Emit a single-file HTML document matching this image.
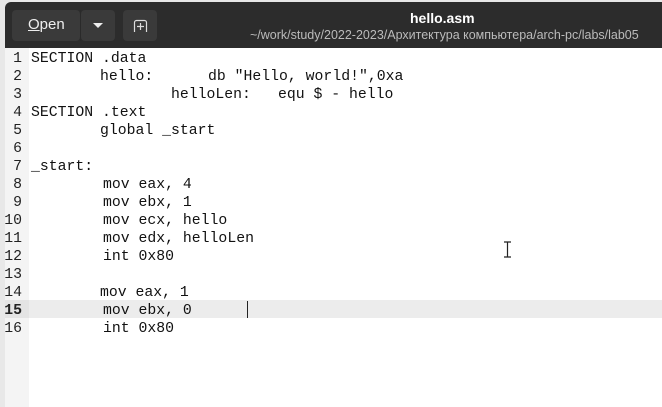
<!DOCTYPE html>
<html><head><meta charset="utf-8"><style>
*{margin:0;padding:0;box-sizing:border-box}
body{width:662px;height:403px;background:#e8e8e8;position:relative;overflow:hidden;font-family:"Liberation Sans","DejaVu Sans",sans-serif}
.win{position:absolute;left:5px;top:2px;width:660px;height:405px;background:#fff;border-radius:6px 0 0 0;overflow:hidden}
.hdr{position:absolute;left:0;top:0;right:0;height:46px;background:#2c2c2c}
.btn{position:absolute;top:8px;height:31px;background:#3a3a3a;border-radius:4px;color:#eee;font-size:15px}
.gut{position:absolute;left:0;top:46px;width:24px;bottom:0;background:#f4f4f4}
.ln{position:absolute;left:0;width:22px;text-align:right;font:14.8px/18px "Liberation Mono","DejaVu Sans Mono",monospace;color:#222}
.c{position:absolute;font:14.8px/18px "Liberation Mono","DejaVu Sans Mono",monospace;color:#111;white-space:pre}
</style></head><body>
<div class="win">
<div class="hdr">
 <div class="btn" style="left:7px;width:68px;"><span style="position:absolute;left:16px;top:6px"><u>O</u>pen</span></div>
 <div style="position:absolute;left:75px;top:8px;width:1px;height:31px;background:#2a2a2a"></div>
 <div class="btn" style="left:76px;width:34px;"><span style="position:absolute;left:12px;top:13px;width:0;height:0;border-left:5px solid transparent;border-right:5px solid transparent;border-top:5px solid #eee"></span></div>
 <div class="btn" style="left:118px;width:34px;">
  <svg width="34" height="31" style="position:absolute;left:0;top:0"><path d="M11.5 22V12.5a2 2 0 0 1 2-2h8a2 2 0 0 1 2 2V22" fill="none" stroke="#ddd" stroke-width="1.2"/><path d="M17.5 13v7M14 16.5h7" stroke="#ddd" stroke-width="1.2"/></svg>
 </div>
 <div style="position:absolute;left:405px;top:8px;color:#fff;font-weight:bold;font-size:14px">hello.asm</div>
 <div style="position:absolute;left:245px;top:26px;color:#bbb;font-size:12.5px;white-space:nowrap">~/work/study/2022-2023/Архитектура компьютера/arch-pc/labs/lab05</div>
</div>
<div class="gut"></div>
<div style="position:absolute;left:24px;right:0;top:298px;height:18px;background:#ececec"></div>
<div style="position:absolute;left:0;top:298px;width:24px;height:18px;background:#e4e4e4"></div>
<div style="position:absolute;left:242px;top:299px;width:1px;height:17px;background:#222"></div>
</div>
<div style="position:absolute;left:0;top:50px;width:662px;height:353px">
<div class="ln" style="top:0">1</div><div class="ln" style="top:18px">2</div><div class="ln" style="top:36px">3</div><div class="ln" style="top:54px">4</div><div class="ln" style="top:72px">5</div><div class="ln" style="top:90px">6</div><div class="ln" style="top:108px">7</div><div class="ln" style="top:126px">8</div><div class="ln" style="top:144px">9</div><div class="ln" style="top:162px">10</div><div class="ln" style="top:180px">11</div><div class="ln" style="top:198px">12</div><div class="ln" style="top:216px">13</div><div class="ln" style="top:234px">14</div><div class="ln" style="top:252px;font-weight:bold">15</div><div class="ln" style="top:270px">16</div>
<div class="c" style="left:31px;top:0">SECTION .data</div>
<div class="c" style="left:100px;top:18px">hello:</div><div class="c" style="left:208px;top:18px">db "Hello, world!",0xa</div>
<div class="c" style="left:171px;top:36px">helloLen:</div><div class="c" style="left:278px;top:36px">equ $ - hello</div>
<div class="c" style="left:31px;top:54px">SECTION .text</div>
<div class="c" style="left:100px;top:72px">global _start</div>
<div class="c" style="left:31px;top:108px">_start:</div>
<div class="c" style="left:103px;top:126px">mov eax, 4</div>
<div class="c" style="left:103px;top:144px">mov ebx, 1</div>
<div class="c" style="left:103px;top:162px">mov ecx, hello</div>
<div class="c" style="left:103px;top:180px">mov edx, helloLen</div>
<div class="c" style="left:103px;top:198px">int 0x80</div>
<div class="c" style="left:100px;top:234px">mov eax, 1</div>
<div class="c" style="left:103px;top:252px">mov ebx, 0</div>
<div class="c" style="left:103px;top:270px">int 0x80</div>
</div>
<svg style="position:absolute;left:503px;top:241px" width="9" height="17"><path d="M1 1h7M4.5 1v15M1 16h7" stroke="#222" stroke-width="1.2" fill="none"/></svg>
</body></html>
